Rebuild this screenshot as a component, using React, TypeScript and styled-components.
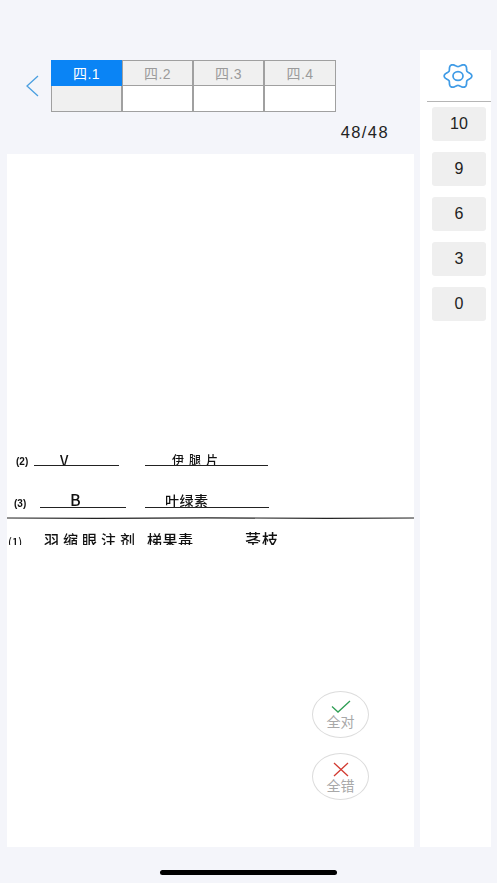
import React from "react";
import styled, { createGlobalStyle } from "styled-components";

const tabs = ["四.1", "四.2", "四.3", "四.4"];
const scores = ["10", "9", "6", "3", "0"];

// six soft lobes, wider than tall like the reference gear
const gearPath = () => {
  const points: string[] = [];
  for (let i = 0; i < 120; i++) {
    const a = (i / 120) * Math.PI * 2;
    const r = 11.2 + 1.6 * Math.cos(6 * a);
    const x = 15 + r * Math.cos(a) * 1.08;
    const y = 13 + r * Math.sin(a) * 0.98;
    points.push(`${x.toFixed(2)} ${y.toFixed(2)}`);
  }
  return `M${points.join("L")}Z`;
};

function App() {
  return (
    <Page>
      <GlobalStyle />
      <Main>
        <LeftColumn>
          <Header>
            <TopRow>
              <BackButton>
                <svg width="14" height="22" viewBox="0 0 14 22" fill="none">
                  <path d="M13 1 L2 11 L13 21" stroke="#4a9fe0" strokeWidth="1.3" />
                </svg>
              </BackButton>
              <Table>
                {tabs.map((t, i) => (
                  <HeadCell key={t} $active={i === 0}>
                    {t}
                  </HeadCell>
                ))}
                {tabs.map((t, i) => (
                  <BodyCell key={t} $active={i === 0} />
                ))}
              </Table>
            </TopRow>
            <Counter>48/48</Counter>
          </Header>
          <Paper>
            <Scan>
              <svg width="407" height="95" viewBox="0 0 407 95">
                <g fill="#111" fontFamily="'Noto Sans CJK SC', sans-serif">
                  <PrintLabel x="9" y="15">(2)</PrintLabel>
                  <HandText x="53" y="16" fontSize="14">V</HandText>
                  <HandText x="165" y="15" fontSize="12" textLength="46">伊腿片</HandText>
                  <PrintLabel x="7" y="57">(3)</PrintLabel>
                  <HandText x="63" y="56" fontSize="16">B</HandText>
                  <HandText x="158" y="56" fontSize="14" textLength="43">叶绿素</HandText>
                  <HandText x="1" y="96" fontSize="11">(1)</HandText>
                  <HandText x="37" y="96" fontSize="15" textLength="91">羽缩眼注剂</HandText>
                  <HandText x="140" y="96" fontSize="15" textLength="46">梯果毒</HandText>
                  <HandText x="238" y="96" fontSize="16" textLength="33">茎枝</HandText>
                </g>
                <g stroke="#222" strokeWidth="1" fill="none">
                  <path d="M27 15.5H112" />
                  <path d="M138 15.5H261" />
                  <path d="M33 57.5H119" />
                  <path d="M138 57.5H262" />
                  <path d="M0 68 L90 68.4 L200 67.8 L320 68.4 L407 68" strokeWidth="1.2" />
                </g>
              </svg>
            </Scan>
            <Floating>
              <RoundButton>
                <svg width="20" height="13" viewBox="0 0 20 13" fill="none">
                  <path d="M1 6.5 L7 12 L19 1" stroke="#2f9e55" strokeWidth="1.3" />
                </svg>
                全对
              </RoundButton>
              <RoundButton>
                <svg width="16" height="15" viewBox="0 0 16 15" fill="none">
                  <path d="M1 1 L15 14 M15 1 L1 14" stroke="#d23b32" strokeWidth="1.3" />
                </svg>
                全错
              </RoundButton>
            </Floating>
          </Paper>
        </LeftColumn>
        <Sidebar>
          <GearBox>
            <svg width="30" height="26" viewBox="0 0 30 26" fill="none" stroke="#3f9be6" strokeWidth="1.7">
              <path d={gearPath()} strokeLinejoin="round" />
              <ellipse cx="15" cy="13" rx="5" ry="4.4" />
            </svg>
          </GearBox>
          {scores.map((s) => (
            <ScoreButton key={s}>{s}</ScoreButton>
          ))}
        </Sidebar>
      </Main>
      <BottomBar>
        <HomeIndicator />
      </BottomBar>
    </Page>
  );
}

const GlobalStyle = createGlobalStyle`
  html, body {
    margin: 0;
    padding: 0;
    background: #f4f5fa;
  }
`;

const Page = styled.div`
  width: 497px;
  height: 883px;
  padding-top: 50px;
  box-sizing: border-box;
  display: flex;
  flex-direction: column;
  overflow: hidden;
  background: #f4f5fa;
  font-family: "Liberation Sans", "Noto Sans CJK SC", sans-serif;
`;

const Main = styled.div`
  display: flex;
  height: 797px;
  gap: 6px;
`;

const LeftColumn = styled.div`
  width: 414px;
  display: flex;
  flex-direction: column;
`;

const Header = styled.header`
  height: 104px;
  box-sizing: border-box;
  padding-top: 10px;
`;

const TopRow = styled.div`
  display: flex;
  align-items: center;
`;

const BackButton = styled.div`
  width: 51px;
  padding-left: 25px;
  box-sizing: border-box;
  display: flex;
  align-items: center;
`;

const Table = styled.div`
  display: grid;
  grid-template-columns: 71px 71px 71px 72px;
  grid-template-rows: 26px 26px;
`;

const HeadCell = styled.div<{ $active: boolean }>`
  display: flex;
  align-items: center;
  justify-content: center;
  box-sizing: border-box;
  font-size: 14px;
  letter-spacing: 0.4px;
  border: 1px solid ${(p) => (p.$active ? "#0a84f5" : "#a0a0a0")};
  background: ${(p) => (p.$active ? "#0a84f5" : "#f0f0f0")};
  color: ${(p) => (p.$active ? "#ffffff" : "#9b9b9b")};
`;

const BodyCell = styled.div<{ $active: boolean }>`
  box-sizing: border-box;
  border: 1px solid #a0a0a0;
  border-top: 0;
  background: ${(p) => (p.$active ? "#f0f0f0" : "#ffffff")};
`;

const Counter = styled.div`
  margin-top: 11px;
  padding-right: 25px;
  text-align: right;
  font-size: 16.5px;
  letter-spacing: 1.4px;
  line-height: 18px;
  color: #222222;
`;

const Paper = styled.main`
  position: relative;
  flex: 1;
  margin-left: 7px;
  background: #ffffff;
  padding-top: 296px;
`;

const Scan = styled.div`
  height: 95px;
  overflow: hidden;

  svg {
    display: block;
    filter: blur(0.35px);
  }
`;

const PrintLabel = styled.text`
  font-family: "Liberation Sans", sans-serif;
  font-size: 10px;
  font-weight: 700;
`;

const HandText = styled.text`
  font-weight: 500;
`;

const Floating = styled.div`
  position: absolute;
  left: 305px;
  top: 537px;
  display: flex;
  flex-direction: column;
  gap: 15px;
`;

const RoundButton = styled.div`
  width: 57px;
  height: 47px;
  box-sizing: border-box;
  padding-top: 8px;
  border: 1px solid #dcdcdc;
  border-radius: 50%;
  background: #ffffff;
  display: flex;
  flex-direction: column;
  align-items: center;
  gap: 1px;
  font-size: 14px;
  line-height: 17px;
  color: #a8a8a8;

  svg {
    flex-shrink: 0;
  }
`;

const Sidebar = styled.aside`
  width: 71px;
  background: #ffffff;
  display: flex;
  flex-direction: column;
  align-items: flex-end;
  gap: 11px;
`;

const GearBox = styled.div`
  width: 64px;
  height: 52px;
  margin-bottom: -6px;
  padding-right: 2px;
  box-sizing: border-box;
  display: flex;
  align-items: center;
  justify-content: center;
  border-bottom: 1px solid #b5b5b5;
`;

const ScoreButton = styled.div`
  width: 54px;
  height: 34px;
  margin-right: 5px;
  border-radius: 3px;
  background: #efefef;
  display: flex;
  align-items: center;
  justify-content: center;
  font-size: 16px;
  color: #222222;
`;

const BottomBar = styled.div`
  flex: 1;
  display: flex;
  justify-content: center;
  align-items: flex-start;
  padding-top: 23px;
`;

const HomeIndicator = styled.div`
  width: 177px;
  height: 5px;
  margin-right: 1px;
  border-radius: 3px;
  background: #000000;
`;

export default App;
